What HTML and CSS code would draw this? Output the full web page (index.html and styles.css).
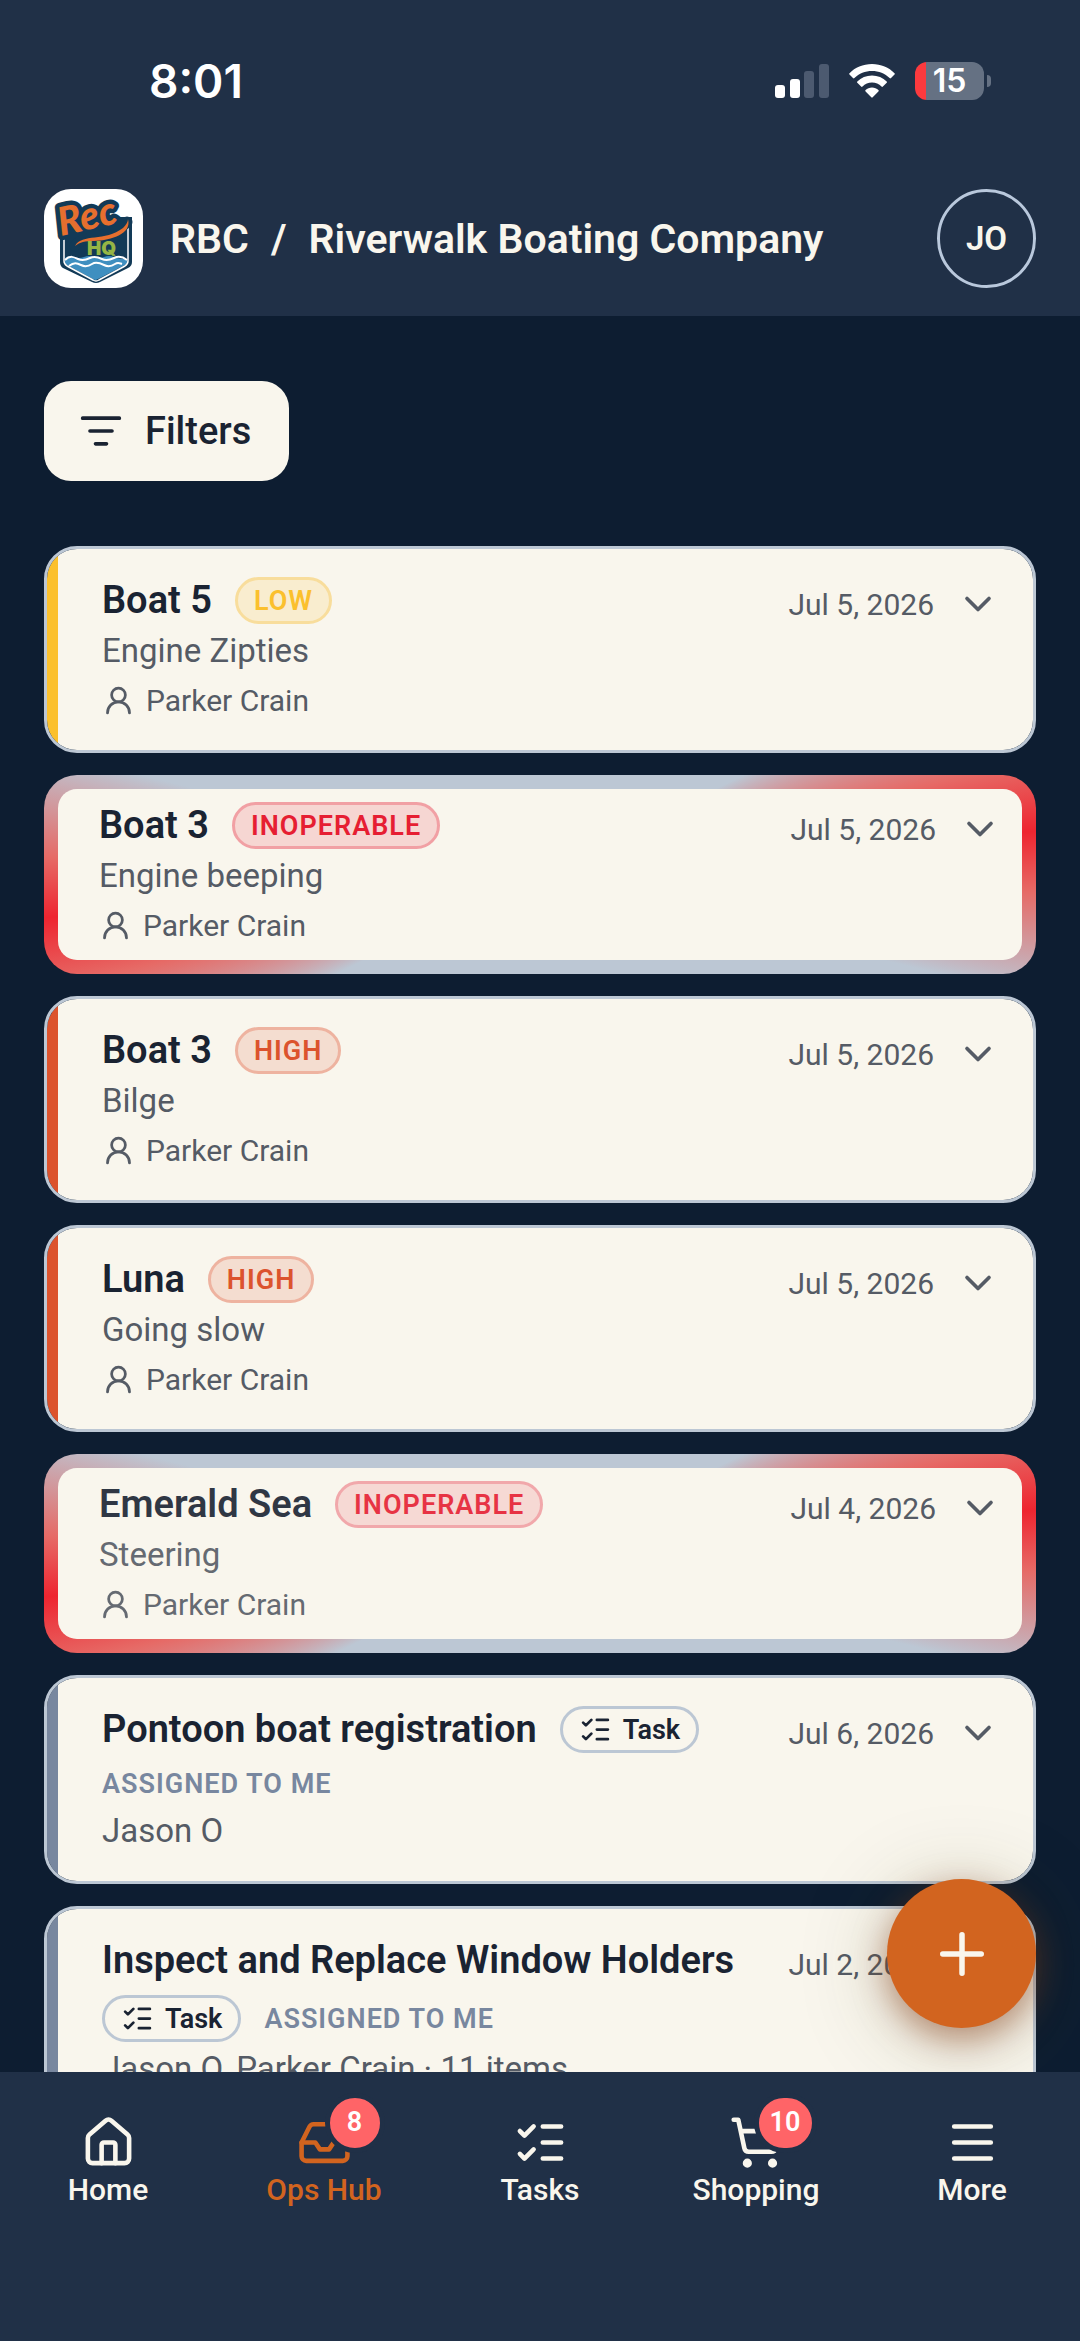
FILE: index.html
```html
<!DOCTYPE html>
<html lang="en">
<head>
<meta charset="utf-8">
<meta name="viewport" content="width=device-width, initial-scale=1">
<title>Ops Hub</title>
<link rel="stylesheet" href="styles.css">
</head>
<body>
<svg class="sprite" aria-hidden="true">
  <symbol id="i-user" viewBox="0 0 24 24"><circle cx="12" cy="8" r="5"/><path d="M20 21a8 8 0 0 0-16 0"/></symbol>
  <symbol id="i-chevron" viewBox="0 0 24 24"><path d="m6 9 6 6 6-6"/></symbol>
  <symbol id="i-checks" viewBox="0 0 24 24"><path d="M13 5h8M13 12h8M13 19h8M3 17l2 2 4-4M3 7l2 2 4-4"/></symbol>
</svg>

<header class="top">
  <div class="status">
    <span class="clock">8:01</span>
    <div class="status-icons">
      <svg width="54" height="36" viewBox="0 0 54 36" aria-hidden="true">
        <rect x="0" y="22" width="10" height="13" rx="3" fill="#fff"/>
        <rect x="15" y="16" width="10" height="19" rx="3" fill="#fff"/>
        <rect x="29" y="8" width="10" height="27" rx="3" fill="#4c5a70"/>
        <rect x="44" y="1" width="10" height="34" rx="3" fill="#4c5a70"/>
      </svg>
      <svg width="46" height="36" viewBox="0 0 46 36" aria-hidden="true">
        <path fill="#fff" d="M23 1C14 1 6 4.500.5 10.200a1 1 0 0 0 0 1.400l3.500 3.500a1 1 0 0 0 1.400 0C10 10.600 16.200 8 23 8s13 2.600 17.600 7.100a1 1 0 0 0 1.400 0l3.500-3.500a1 1 0 0 0 0-1.400C40 4.500 32 1 23 1z"/>
        <path fill="#fff" d="M23 12.500c-5.700 0-10.900 2.200-14.700 5.900a1 1 0 0 0 0 1.400l3.800 3.800a1 1 0 0 0 1.400 0C16 21 19.300 19.500 23 19.500s7 1.500 9.500 4.100a1 1 0 0 0 1.400 0l3.800-3.800a1 1 0 0 0 0-1.400C33.900 14.700 28.700 12.500 23 12.500z"/>
        <path fill="#fff" d="M23 24.500c-2.500 0-4.700.9-6.400 2.400a1 1 0 0 0 0 1.500l5.700 5.900a1 1 0 0 0 1.400 0l5.700-5.900a1 1 0 0 0 0-1.500c-1.700-1.500-3.900-2.400-6.400-2.400z"/>
      </svg>
      <div class="battery"><span class="battery-body">15</span><span class="battery-tip"></span></div>
    </div>
  </div>
  <div class="bar">
    <a class="logo" href="#" aria-label="Rec HQ">
      <svg viewBox="0 0 99 99" aria-hidden="true">
        <path d="M16 40v33q0 4 3 6l29 14q4 2 8 0l28-14q4-2 4-6V28H16z" fill="#123a57"/>
        <path d="M21 69q4-3 9-1t10 0 10 0 10 0 10 0 13 2v3q0 2-2 3L54 90q-3 2-5 0L23 76q-2-1-2-3z" fill="#3f8fc0"/>
        <path d="M20 46v26q0 3 3 5l26 14q3 2 6 0l26-14q3-2 3-5V38" fill="none" stroke="#fff" stroke-width="1.500"/>
        <path d="M21 71c5-5 9-3 13-1s8 1 12-1 8-1 12 1 8 1 12-1 8-2 13 2M25 77c5-4 8-3 12-1s8 1 11-1 8-1 12 1 8 1 11-1 4-1 7 0" fill="none" stroke="#fff" stroke-width="2"/>
        <path d="M31 57c10-13 32-4 52-24" fill="none" stroke="#123a57" stroke-width="11" stroke-linecap="round"/>
        <text class="logo-rec" x="17" y="47" transform="rotate(-13 17 47)">Rec</text>
        <path d="M31 57c7-13 30-4 48-18 3-3 5-6 5-9 4 15-16 21-34 22-9 0-14 1-19 5z" fill="#e66f2e"/>
        <text class="logo-hq" x="43" y="66">HQ</text>
      </svg>
    </a>
    <nav class="crumbs" aria-label="Location"><span>RBC</span><span>/</span><span>Riverwalk Boating Company</span></nav>
    <button class="avatar" type="button">JO</button>
  </div>
</header>

<main class="content">
  <button class="filters" type="button">
    <svg class="icon icon-m" viewBox="0 0 24 24" aria-hidden="true"><path d="M2 5h20M6 12h12M9 19h6"/></svg>
    Filters
  </button>

  <div class="list">
    <article class="card low">
      <div class="info">
        <div class="heading"><h2>Boat 5</h2><span class="tag tag-low">LOW</span></div>
        <p class="desc">Engine Zipties</p>
        <p class="person"><svg class="icon icon-s" aria-hidden="true"><use href="#i-user"/></svg>Parker Crain</p>
      </div>
      <div class="when"><time>Jul 5, 2026</time><button class="toggle" type="button" aria-label="Expand"><svg class="icon icon-m" aria-hidden="true"><use href="#i-chevron"/></svg></button></div>
    </article>

    <article class="card inoperable">
      <div class="info">
        <div class="heading"><h2>Boat 3</h2><span class="tag tag-inoperable">INOPERABLE</span></div>
        <p class="desc">Engine beeping</p>
        <p class="person"><svg class="icon icon-s" aria-hidden="true"><use href="#i-user"/></svg>Parker Crain</p>
      </div>
      <div class="when"><time>Jul 5, 2026</time><button class="toggle" type="button" aria-label="Expand"><svg class="icon icon-m" aria-hidden="true"><use href="#i-chevron"/></svg></button></div>
    </article>

    <article class="card high">
      <div class="info">
        <div class="heading"><h2>Boat 3</h2><span class="tag tag-high">HIGH</span></div>
        <p class="desc">Bilge</p>
        <p class="person"><svg class="icon icon-s" aria-hidden="true"><use href="#i-user"/></svg>Parker Crain</p>
      </div>
      <div class="when"><time>Jul 5, 2026</time><button class="toggle" type="button" aria-label="Expand"><svg class="icon icon-m" aria-hidden="true"><use href="#i-chevron"/></svg></button></div>
    </article>

    <article class="card high">
      <div class="info">
        <div class="heading"><h2>Luna</h2><span class="tag tag-high">HIGH</span></div>
        <p class="desc">Going slow</p>
        <p class="person"><svg class="icon icon-s" aria-hidden="true"><use href="#i-user"/></svg>Parker Crain</p>
      </div>
      <div class="when"><time>Jul 5, 2026</time><button class="toggle" type="button" aria-label="Expand"><svg class="icon icon-m" aria-hidden="true"><use href="#i-chevron"/></svg></button></div>
    </article>

    <article class="card inoperable">
      <div class="info dim">
        <div class="heading"><h2>Emerald Sea</h2><span class="tag tag-inoperable">INOPERABLE</span></div>
        <p class="desc">Steering</p>
        <p class="person"><svg class="icon icon-s" aria-hidden="true"><use href="#i-user"/></svg>Parker Crain</p>
      </div>
      <div class="when"><time>Jul 4, 2026</time><button class="toggle" type="button" aria-label="Expand"><svg class="icon icon-m" aria-hidden="true"><use href="#i-chevron"/></svg></button></div>
    </article>

    <article class="card task">
      <div class="info">
        <div class="heading"><h2>Pontoon boat registration</h2><span class="tag tag-task"><svg class="icon icon-s" aria-hidden="true"><use href="#i-checks"/></svg>Task</span><span class="assigned">ASSIGNED TO ME</span></div>
        <p class="people">Jason O</p>
      </div>
      <div class="when"><time>Jul 6, 2026</time><button class="toggle" type="button" aria-label="Expand"><svg class="icon icon-m" aria-hidden="true"><use href="#i-chevron"/></svg></button></div>
    </article>

    <article class="card task">
      <div class="info">
        <div class="heading"><h2>Inspect and Replace Window Holders</h2><span class="tag tag-task"><svg class="icon icon-s" aria-hidden="true"><use href="#i-checks"/></svg>Task</span><span class="assigned">ASSIGNED TO ME</span></div>
        <p class="people">Jason O, Parker Crain · 11 items</p>
      </div>
      <div class="when"><time>Jul 2, 2026</time><button class="toggle" type="button" aria-label="Expand"><svg class="icon icon-m" aria-hidden="true"><use href="#i-chevron"/></svg></button></div>
    </article>
  </div>

  <button class="fab" type="button" aria-label="Add"><svg class="icon icon-xl" viewBox="0 0 24 24" aria-hidden="true"><path d="M5 12h14M12 5v14"/></svg></button>
</main>

<nav class="tabs" aria-label="Main">
  <a class="tab" href="#"><span class="tab-icon"><svg class="icon icon-l" viewBox="0 0 24 24" aria-hidden="true"><path d="M15 21v-8a1 1 0 0 0-1-1h-4a1 1 0 0 0-1 1v8"/><path d="M3 10a2 2 0 0 1 .709-1.528l7-6a2 2 0 0 1 2.582 0l7 6A2 2 0 0 1 21 10v9a2 2 0 0 1-2 2H5a2 2 0 0 1-2-2z"/></svg></span>Home</a>
  <a class="tab active" href="#" aria-current="page"><span class="tab-icon"><svg class="icon icon-l" viewBox="0 0 24 24" aria-hidden="true"><path d="M22 12h-6l-2 3h-4l-2-3H2"/><path d="M5.450 5.110 2 12v6a2 2 0 0 0 2 2h16a2 2 0 0 0 2-2v-6l-3.450-6.890A2 2 0 0 0 16.760 4H7.240a2 2 0 0 0-1.790 1.110z"/></svg><span class="count">8</span></span>Ops Hub</a>
  <a class="tab" href="#"><span class="tab-icon"><svg class="icon icon-l" aria-hidden="true"><use href="#i-checks"/></svg></span>Tasks</a>
  <a class="tab" href="#"><span class="tab-icon"><svg class="icon icon-l" viewBox="0 0 24 24" aria-hidden="true"><circle cx="8" cy="21" r="1"/><circle cx="19" cy="21" r="1"/><path d="M2.050 2.050h2l2.660 12.420a2 2 0 0 0 2 1.580h9.780a2 2 0 0 0 1.950-1.570l1.650-7.430H5.120"/></svg><span class="count wide">10</span></span>Shopping</a>
  <a class="tab" href="#"><span class="tab-icon"><svg class="icon icon-l" viewBox="0 0 24 24" aria-hidden="true"><path d="M4 5h16M4 12h16M4 19h16"/></svg></span>More</a>
</nav>
</body>
</html>
```
FILE: styles.css
```css
:root {
  --bar: #203047;
  --page: #0d1d31;
  --cream: #f9f6ed;
  --ink: #1a2332;
  --gray: #555b65;
  --line: #bcc7d4;
  --slate: #78879f;
  --orange: #d2641f;
}

* { box-sizing: border-box; }

body {
  margin: 0;
  height: 100vh;
  display: flex;
  flex-direction: column;
  overflow: hidden;
  background: var(--page);
  color: var(--ink);
  font-family: Roboto, "Liberation Sans", sans-serif;
}

button { font: inherit; color: inherit; border: 0; padding: 0; background: none; }
a { color: inherit; text-decoration: none; }
h2, p { margin: 0; }

.sprite { display: none; }

.icon {
  display: block;
  flex: none;
  fill: none;
  stroke: currentColor;
  stroke-width: 2;
  stroke-linecap: round;
  stroke-linejoin: round;
}
.icon-s { width: 33px; height: 33px; }
.icon-m { width: 44px; height: 44px; }
.icon-l { width: 55px; height: 55px; }
.icon-xl { width: 66px; height: 66px; }

/* Header */
.top { flex: none; background: var(--bar); padding: 0 44px 28px; }

.status {
  display: flex;
  align-items: center;
  justify-content: space-between;
  height: 161px;
  padding: 0 45px 0 105px;
  color: #fff;
  font-family: Inter, sans-serif;
  font-weight: 600;
}
.clock { font-size: 46px; }
.status-icons { display: flex; align-items: center; gap: 20px; }
.battery { display: flex; align-items: center; gap: 3px; }
.battery-body {
  width: 69px;
  height: 38px;
  border-radius: 12px;
  background: linear-gradient(90deg, #fc3a3e 11px, #657183 11px);
  font-size: 32px;
  line-height: 38px;
  text-align: center;
}
.battery-tip { width: 4px; height: 12px; border-radius: 0 4px 4px 0; background: #657183; }

.bar { display: flex; align-items: center; margin-top: 28px; color: var(--cream); }
.logo { width: 99px; height: 99px; border-radius: 27px; background: #fff; overflow: hidden; }
.logo svg { display: block; width: 100%; height: 100%; }
.logo-rec {
  font: italic 900 39px Lato, sans-serif;
  fill: #e66f2e;
  stroke: #123a57;
  stroke-width: 9px;
  stroke-linejoin: round;
  paint-order: stroke;
}
.logo-hq { font: 900 19px Inter, sans-serif; fill: #95b545; }
.crumbs { display: flex; flex: 1; gap: 22px; padding-left: 27px; font-size: 41px; font-weight: 600; white-space: nowrap; }
.avatar {
  width: 99px;
  height: 99px;
  border: 3px solid #b9c8dc;
  border-radius: 50%;
  font-size: 33px;
  font-weight: 600;
}

/* Content */
.content { position: relative; flex: 1; min-height: 0; padding: 65px 44px 0; overflow: hidden; }

.filters {
  display: flex;
  align-items: center;
  gap: 22px;
  height: 100px;
  padding: 0 38px 0 35px;
  border-radius: 27px;
  background: var(--cream);
  font-size: 38px;
  font-weight: 500;
}

.list { display: flex; flex-direction: column; gap: 22px; margin-top: 65px; }

.card {
  --stripe: var(--slate);
  display: flex;
  align-items: flex-start;
  justify-content: space-between;
  padding: 28px 33px 27px 55px;
  border: 3px solid var(--line);
  border-radius: 33px;
  background: linear-gradient(90deg, var(--stripe) 11px, var(--cream) 11px);
  background-clip: padding-box;
  background-origin: padding-box;
}
.low { --stripe: #fbc02d; }
.high { --stripe: #dc532d; }
.inoperable {
  padding: 13px 20px 12px 41px;
  border: 14px solid transparent;
  background:
    linear-gradient(var(--cream), var(--cream)) padding-box,
    conic-gradient(var(--line) 64deg, #e66a66 77deg, #ee2530 85deg, #e66a66 92deg, var(--line) 104deg,
      var(--line) 244deg, #e66a66 257deg, #ee2530 265deg, #e66a66 272deg, var(--line) 284deg) border-box;
}

.info { flex: 1; min-width: 0; }
.dim { opacity: .9; }
.heading { display: flex; flex-wrap: wrap; align-items: center; gap: 11px 23px; }
.heading h2 { font-size: 38px; line-height: 47px; font-weight: 600; }
.desc { margin-top: 3px; font-size: 33px; line-height: 48px; color: var(--gray); }
.person {
  display: flex;
  align-items: center;
  gap: 11px;
  margin-top: 3px;
  font-size: 30px;
  line-height: 45px;
  color: var(--gray);
}
.people { margin-top: 4px; font-size: 33px; line-height: 46px; color: var(--gray); }

.tag {
  display: flex;
  align-items: center;
  gap: 11px;
  height: 47px;
  padding: 0 16px;
  border: 3px solid;
  border-radius: 24px;
  font-size: 27px;
  font-weight: 600;
}
.tag-low, .tag-high, .tag-inoperable, .assigned { letter-spacing: 1px; }
.tag-low { color: #fbc02d; background: #f9edcf; border-color: #f8dd9c; }
.tag-high { color: #dc532d; background: #f4ddd0; border-color: #eeb3a0; }
.tag-inoperable { color: #e61e32; background: #f6d6d2; border-color: #f1a0a4; }
.tag-task { border-color: var(--line); color: var(--ink); }
.assigned { font-size: 27px; line-height: 40px; font-weight: 600; color: var(--slate); }

.when { display: flex; align-items: center; gap: 22px; padding: 5px 0 0 22px; color: var(--gray); font-size: 30px; white-space: nowrap; }

.fab {
  position: absolute;
  right: 44px;
  bottom: 44px;
  display: grid;
  place-items: center;
  width: 149px;
  height: 149px;
  border-radius: 50%;
  background: var(--orange);
  color: var(--cream);
  box-shadow: 0 11px 33px rgba(140, 60, 20, .5), 0 11px 88px rgba(60, 60, 20, .25);
}

/* Tab bar */
.tabs { flex: none; display: grid; grid-template-columns: repeat(5, 1fr); padding: 43px 0 122px; background: var(--bar); color: var(--cream); }
.tab { display: flex; flex-direction: column; align-items: center; height: 104px; font-size: 30px; line-height: 40px; font-weight: 500; }
.tab-icon { position: relative; display: block; }
.active { color: var(--orange); }
.count {
  position: absolute;
  top: -22px;
  left: 28px;
  min-width: 60px;
  height: 60px;
  padding: 0 6px;
  border: 5px solid var(--bar);
  border-radius: 30px;
  background: #ff6467;
  color: #fff;
  font-size: 27px;
  line-height: 48px;
  font-weight: 600;
  text-align: center;
}
.count.wide { left: 25px; min-width: 63px; }
```
